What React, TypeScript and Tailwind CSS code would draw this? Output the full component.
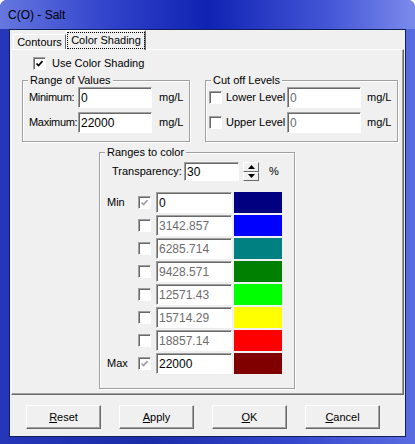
import React from 'react';

const font = { fontFamily: '"Liberation Sans", Arial, sans-serif' };

const sunken =
  'border border-t-[#a0a0a0] border-l-[#a0a0a0] border-b-white border-r-white shadow-[inset_1px_1px_0_#696969] bg-white';

function Check({ checked = false, disabled = false }: { checked?: boolean; disabled?: boolean }) {
  return (
    <div className={`w-[13px] h-[13px] shrink-0 flex items-center justify-center ${sunken}`}>
      {checked && (
        <svg width="9" height="9" viewBox="0 0 9 9">
          <polyline
            points="1.5,4.5 3.5,6.5 7.5,2.2"
            fill="none"
            stroke={disabled ? '#a0a0a0' : '#000'}
            strokeWidth="1.7"
          />
        </svg>
      )}
    </div>
  );
}

function Field({ value, w, h = 21, disabled = false }: { value: string; w: string; h?: number; disabled?: boolean }) {
  return (
    <div
      className={`${w} ${h === 21 ? 'h-[21px]' : 'h-[19px]'} ${sunken} shrink-0 flex items-center pl-[2px] text-[12px] leading-none ${
        disabled ? 'text-[#6d6d6d]' : 'text-black'
      }`}
    >
      {value}
    </div>
  );
}

function Group({ label, className, children }: { label: string; className: string; children: React.ReactNode }) {
  return (
    <div className={`relative border border-[#a0a0a0] shadow-[1px_1px_0_#fff,inset_1px_1px_0_#fff] ${className}`}>
      <span className="absolute -top-[8px] left-[5px] px-[2px] bg-[#f0f0f0] leading-[14px]">{label}</span>
      {children}
    </div>
  );
}

function Btn({ u, rest }: { u: string; rest: string }) {
  return (
    <div className="w-[75px] h-[24px] bg-[#f0f0f0] border border-t-white border-l-white border-b-[#696969] border-r-[#696969] shadow-[inset_-1px_-1px_0_#a0a0a0] flex items-center justify-center">
      <span>
        <span className="underline">{u}</span>
        {rest}
      </span>
    </div>
  );
}

const rows = [
  { label: 'Min', v: '0', c: 'bg-[#000080]', on: true },
  { label: '', v: '3142.857', c: 'bg-[#0000ff]', on: false },
  { label: '', v: '6285.714', c: 'bg-[#008080]', on: false },
  { label: '', v: '9428.571', c: 'bg-[#008000]', on: false },
  { label: '', v: '12571.43', c: 'bg-[#00ff00]', on: false },
  { label: '', v: '15714.29', c: 'bg-[#ffff00]', on: false },
  { label: '', v: '18857.14', c: 'bg-[#ff0000]', on: false },
  { label: 'Max', v: '22000', c: 'bg-[#800000]', on: true },
];

export default function App() {
  return (
    <div className="w-[415px] h-[444px] bg-white overflow-hidden text-black text-[11px] whitespace-nowrap" style={font}>
      <div className="w-full h-full rounded-t-[7px] flex flex-col bg-[linear-gradient(90deg,#2536b8_0%,#1a2ca8_35%,#3446cc_70%,#5a6ce0_100%)]">
        <div className="h-[29px] shrink-0 flex items-center pl-[8px] text-[12px] bg-[linear-gradient(90deg,#6677e0_0%,#3345cc_25%,#0f22b2_50%,#4658d8_80%,#7b8bec_100%)] rounded-t-[7px]">
          C(O) - Salt
        </div>
        <div className="mx-[9px] h-[408px] border border-[#10205a] bg-[#f0f0f0] flex flex-col">
          <div className="h-[19px] shrink-0 flex items-end pl-[3px] relative z-10">
            <div className="w-[53px] h-[15px] border border-b-0 border-t-white border-l-white border-r-[#696969] flex items-center justify-center">
              Contours
            </div>
            <div className="w-[80px] h-[20px] -mb-px bg-[#f0f0f0] border border-b-0 border-t-white border-l-white border-r-[#696969] shadow-[inset_-1px_0_0_#a0a0a0] flex items-center justify-center">
              <span className="outline-1 outline-dotted outline-black px-[3px] leading-[15px]">Color Shading</span>
            </div>
          </div>
          <div className="ml-[1px] w-[393px] h-[346px] border border-t-white border-l-white border-b-[#696969] border-r-[#696969] shadow-[inset_-1px_-1px_0_#a0a0a0]">
            <div className="flex items-center gap-[6px] ml-[21px] mt-[7px] h-[13px]">
              <Check checked />
              <span>Use Color Shading</span>
            </div>
            <div className="flex mt-[10px] ml-[10px]">
              <Group label="Range of Values" className="w-[168px] h-[62px] pt-[6px] pl-[6px]">
                <div className="flex flex-col gap-[4px]">
                  {[
                    ['Minimum:', '0'],
                    ['Maximum:', '22000'],
                  ].map(([l, v]) => (
                    <div key={l} className="flex items-center">
                      <span className="w-[49px] tracking-[-0.3px]">{l}</span>
                      <Field value={v} w="w-[74px]" />
                      <span className="ml-[7px]">mg/L</span>
                    </div>
                  ))}
                </div>
              </Group>
              <Group label="Cut off Levels" className="ml-[15px] w-[193px] h-[62px] pt-[6px] pl-[3px]">
                <div className="flex flex-col gap-[4px]">
                  {['Lower Level', 'Upper Level'].map((l) => (
                    <div key={l} className="flex items-center">
                      <div className="w-[78px] flex items-center gap-[4px]">
                        <Check />
                        <span>{l}</span>
                      </div>
                      <Field value="0" w="w-[74px]" disabled />
                      <span className="ml-[6px]">mg/L</span>
                    </div>
                  ))}
                </div>
              </Group>
            </div>
            <Group label="Ranges to color" className="ml-[87px] mt-[10px] w-[196px] h-[237px] pt-[9px]">
              <div className="flex items-center pl-[12px]">
                <span className="w-[72px]">Transparency:</span>
                <Field value="30" w="w-[55px]" h={19} />
                <div className="ml-[4px] w-[16px] h-[19px] flex flex-col">
                  {['up', 'down'].map((d) => (
                    <div
                      key={d}
                      className="flex-1 bg-[#f0f0f0] border border-t-white border-l-white border-b-[#696969] border-r-[#696969] flex items-center justify-center"
                    >
                      <svg width="7" height="4" viewBox="0 0 7 4">
                        <polygon points={d === 'up' ? '3.5,0 7,4 0,4' : '0,0 7,0 3.5,4'} fill="#000" />
                      </svg>
                    </div>
                  ))}
                </div>
                <span className="ml-[10px]">%</span>
              </div>
              <div className="flex flex-col gap-[2px] mt-[11px] pl-[7px]">
                {rows.map((r, i) => (
                  <div key={i} className="flex items-center h-[21px]">
                    <span className="w-[31px]">{r.label}</span>
                    <Check checked={r.on} disabled />
                    <div className="ml-[5px]">
                      <Field value={r.v} w="w-[76px]" disabled={!r.on} />
                    </div>
                    <div className={`ml-[2px] w-[48px] h-[21px] ${r.c}`} />
                  </div>
                ))}
              </div>
            </Group>
          </div>
          <div className="flex gap-[18px] pl-[16px] mt-[10px]">
            <Btn u="R" rest="eset" />
            <Btn u="A" rest="pply" />
            <Btn u="O" rest="K" />
            <Btn u="C" rest="ancel" />
          </div>
        </div>
      </div>
    </div>
  );
}
